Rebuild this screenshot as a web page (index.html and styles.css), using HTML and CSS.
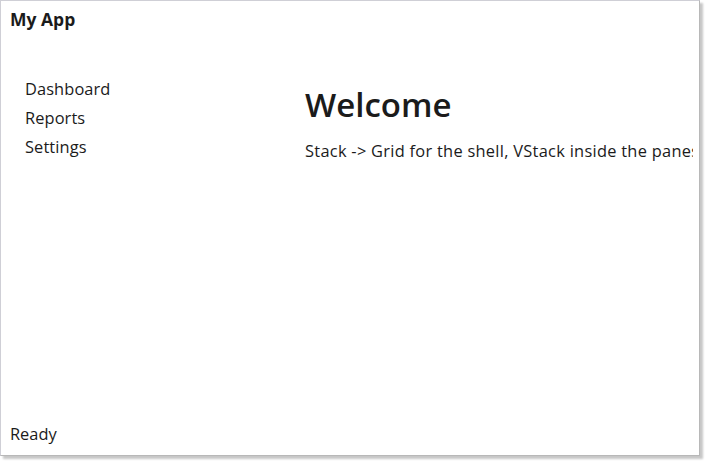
FILE: index.html
```html
<!DOCTYPE html>
<html lang="en">
<head>
<meta charset="utf-8">
<title>My App</title>
<link rel="stylesheet" href="styles.css">
</head>
<body>
<div class="window">
  <header class="titlebar">My App</header>
  <main class="shell">
    <nav class="sidebar">
      <div class="nav-item">Dashboard</div>
      <div class="nav-item">Reports</div>
      <div class="nav-item">Settings</div>
    </nav>
    <section class="pane">
      <h1 class="heading">Welcome</h1>
      <p class="body-text">Stack -&gt; Grid for the shell, VStack inside the panes</p>
    </section>
  </main>
  <footer class="status">Ready</footer>
</div>
</body>
</html>
```

FILE: styles.css
```css
html, body {
  margin: 0;
  padding: 0;
  background: #ffffff;
}

body {
  font-family: "Open Sans", "Noto Sans", sans-serif;
  color: #1b1b1b;
  width: 707px;
  height: 463px;
  overflow: hidden;
}

.window {
  box-sizing: border-box;
  width: 700px;
  height: 456px;
  border: 1px solid #cfcfd6;
  border-right-color: #b8b8b8;
  border-bottom-color: #b8b8b8;
  box-shadow: 3px 3px 2px rgba(0, 0, 0, 0.22);
  background: #ffffff;
  display: flex;
  flex-direction: column;
}

.titlebar {
  padding: 6px 9px 0;
  font-size: 17.5px;
  font-weight: 700;
  line-height: 24px;
}

.shell {
  flex: 1;
  display: grid;
  grid-template-columns: 280px 1fr;
  padding-right: 6px;
  min-height: 0;
}

.sidebar {
  padding: 43px 0 0 24px;
  display: flex;
  flex-direction: column;
}

.nav-item {
  font-size: 16.4px;
  line-height: 29px;
  letter-spacing: 0.1px;
}

.pane {
  padding: 52px 0 0 24px;
  overflow: hidden;
  white-space: nowrap;
}

.heading {
  margin: 0;
  font-size: 33px;
  font-weight: 600;
  line-height: 44px;
}

.body-text {
  margin: 13px 0 0;
  font-size: 16.4px;
  line-height: 22px;
  letter-spacing: 0.28px;
}

.status {
  padding: 0 9px 10px;
  font-size: 16.4px;
  line-height: 22px;
}
```
